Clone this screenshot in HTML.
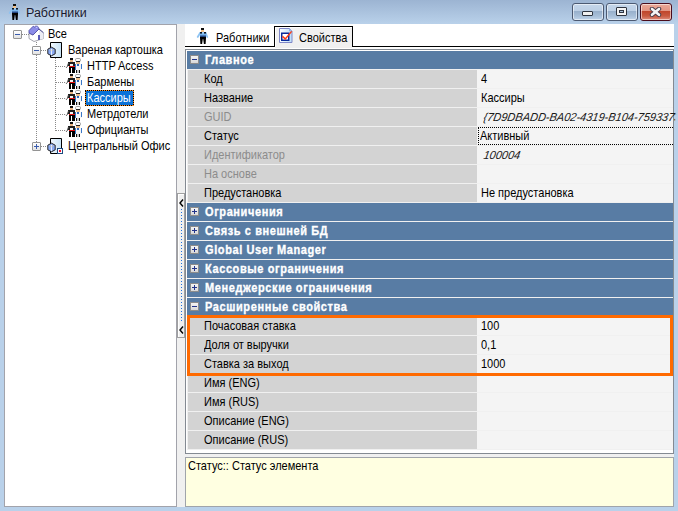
<!DOCTYPE html>
<html><head><meta charset="utf-8"><style>
*{box-sizing:border-box}
html,body{margin:0;padding:0}
body{width:678px;height:511px;position:relative;overflow:hidden;background:#b9d1ea;font-family:"Liberation Sans",sans-serif;font-size:11px;color:#000}
div,span,svg{position:absolute}
.title{left:0;top:0;width:678px;height:24px;background:linear-gradient(#9cb4d2,#b9d1ea)}
.ttext{left:26px;top:6px;font-size:12.5px;color:#1a1a30;white-space:nowrap;text-shadow:0 0 4px rgba(255,255,255,.5)}
.wb{top:3px;width:32px;height:18px;border:1px solid #4c5a72;border-radius:3px;background:linear-gradient(#c4d6ea 0,#bccfe5 45%,#98b0cc 46%,#a8bfd8 75%,#c0d4ea 100%);box-shadow:inset 0 0 0 1px rgba(255,255,255,.55)}
.wbc{border-color:#4a0c1c;background:linear-gradient(#eaa898 0,#e29482 45%,#c0462c 46%,#c85a40 75%,#e09080 100%)}
.tree{left:4px;top:24px;width:173px;height:483px;background:#fff;border:1px solid #a2a3ab}
.tl{white-space:nowrap;height:16px;line-height:16px;transform:scaleY(1.12);transform-origin:0 12px}
.ic{position:absolute}
.exp{width:9px;height:9px;border:1px solid #949494;border-radius:1px;background:linear-gradient(#fff,#e2e2e2)}
.exp .ph{position:absolute;left:1px;top:3px;width:5px;height:1px;background:#3a5cad}
.exp .pv{position:absolute;left:3px;top:1px;width:1px;height:5px;background:#3a5cad}
.hd{width:1px;background-image:linear-gradient(#8a8a8a 50%,transparent 50%);background-size:1px 2px}
.hh{height:1px;background-image:linear-gradient(90deg,#8a8a8a 50%,transparent 50%);background-size:2px 1px}
.split{left:177px;top:24px;width:8px;height:483px;background:#f0f0f0}
.sbtn{left:177px;top:193px;width:8px;height:145px;border:1px solid #a0a0a0;border-right-color:#a0a0a0;background:#f0f0f0;box-shadow:inset 1px 1px 0 #fff}
.arrow{left:1px;width:6px;height:8px}
.dots{left:181px;top:209px;width:1px;height:113px;background-image:linear-gradient(#1e6fdc 34%,transparent 34%);background-size:1px 3px}
.pane{left:185px;top:24px;width:489px;height:483px;background:#fff}
.tabline{top:46px;height:1px;background:#000}
.tab2{left:274px;top:26px;width:79px;height:21px;border:1px solid #000;border-bottom:0;background:#f0f0f0;box-shadow:inset 1px 1px 0 #fff}
.ttab{top:30px;white-space:nowrap;line-height:16px;transform:scaleY(1.12);transform-origin:0 12px}
.grid{left:185px;top:49px;width:489px;height:405px;border:1px solid #848a92;background:#f0f0f0;box-shadow:inset 1px 1px 0 #fff}
.cat{left:187px;width:486px;height:18px;background:#587ca4}
.catt{left:205px;height:18px;line-height:18px;font-weight:bold;color:#fff;letter-spacing:.6px;white-space:nowrap;-webkit-text-stroke:.3px #fff;transform:scaleY(1.12);transform-origin:0 13px}
.lab{left:188px;width:289px;height:18px;background:#d3d3d3}
.val{left:477px;width:196px;height:18px;background:#f4f4f4}
.lt{left:204px;height:18px;line-height:18px;white-space:nowrap;transform:scaleY(1.12);transform-origin:0 13px}
.vt{left:481px;height:18px;line-height:18px;white-space:nowrap;overflow:hidden;width:192px;transform:scaleY(1.12);transform-origin:0 13px}
.gexp{width:9px;height:9px;border:1px solid #8c8c8c;background:linear-gradient(#f4f4f4,#d8d8d8)}
.gexp .ph{position:absolute;left:1px;top:3px;width:5px;height:1px;background:#22338a}
.gexp .pv{position:absolute;left:3px;top:1px;width:1px;height:5px;background:#22338a}
.desc{left:185px;top:457px;width:489px;height:50px;border:1px solid #a0a4aa;background:#ffffe1}
.orange{left:187px;top:315px;width:486px;height:61px;border:3px solid #ff6a00}
</style></head><body>

<div class="title"></div>
<svg class="ic" style="left:8px;top:4px" width="16" height="17" viewBox="0 0 16 17">
<defs><linearGradient id="pt" x1="0" y1="0" x2="0" y2="1"><stop offset="0" stop-color="#a8d4fa"/><stop offset=".5" stop-color="#78b4ec"/><stop offset="1" stop-color="#0e2a66"/></linearGradient></defs>
<path d="M4.2 4L3.4 4.2L1 8.6L0.9 9.8L2.3 9.8L4.3 6.6Z" fill="#8cc2f2"/>
<path d="M9.6 4L10.4 4.2L12 8.6L12.1 9.8L10.7 9.8L9.5 6.6Z" fill="#8cc2f2"/>
<rect x="4" y="4" width="6" height="5" fill="url(#pt)"/>
<rect x="4" y="4" width="2" height="1.6" fill="#0c1420"/><rect x="8" y="4" width="2" height="1.6" fill="#0c1420"/>
<rect x="5" y="0" width="3" height="2" fill="#0e0e0e"/>
<rect x="5" y="2" width="3" height="2" fill="#f2c28a"/>
<path d="M4 9H10V10L9.6 16H7.9L7.2 11H6.8L6.1 16H4.4L4 10Z" fill="#000"/>
</svg>
<div class="ttext">Работники</div>
<div class="wb" style="left:572px"><div style="left:9px;top:7px;width:11px;height:5px;border:1px solid #2e3440;border-radius:1px;background:#f0f0f0"></div></div>
<div class="wb" style="left:606px"><div style="left:9px;top:3px;width:11px;height:9px;border:1px solid #2e3440;border-radius:1px;background:#f4f4f4"><div style="left:2px;top:2px;width:5px;height:3px;border:1px solid #2e3440;background:#a8c0d8"></div></div></div>
<div class="wb wbc" style="left:640px"><svg style="left:8px;top:3px" width="13" height="10" viewBox="0 0 13 10"><path d="M3 1.9L10 7.8M10 1.9L3 7.8" stroke="#463a48" stroke-width="4.4" stroke-linecap="round"/><path d="M3 1.9L10 7.8M10 1.9L3 7.8" stroke="#f4f4f4" stroke-width="2.6" stroke-linecap="round"/></svg></div>
<div class="tree"></div>
<div class="hh" style="left:22px;top:34px;width:7px"></div>
<div class="hd" style="left:36px;top:42px;width:1px;height:4px"></div>
<div class="hd" style="left:36px;top:55px;width:1px;height:91px"></div>
<div class="hh" style="left:41px;top:50px;width:6px"></div>
<div class="hh" style="left:41px;top:146px;width:6px"></div>
<div class="hd" style="left:55px;top:58px;width:1px;height:73px"></div>
<div class="hh" style="left:56px;top:66px;width:10px"></div>
<div class="hh" style="left:56px;top:82px;width:10px"></div>
<div class="hh" style="left:56px;top:98px;width:10px"></div>
<div class="hh" style="left:56px;top:114px;width:10px"></div>
<div class="hh" style="left:56px;top:130px;width:10px"></div>
<div class="exp" style="left:13px;top:30px"><i class="ph"></i></div>
<svg class="ic" style="left:26px;top:24px" width="20" height="20" viewBox="0 0 20 20">
<path d="M3 9L7 11L13 5L17.5 9L17.5 14.5L8 17.5L3 14.5Z" fill="#fff" stroke="#8c8c98" stroke-width=".8"/>
<path d="M13 5L17.5 9L17.5 14.5L13 16Z" fill="#ececf4"/>
<path d="M13 5L17.5 8.8" stroke="#4a4a90" stroke-width="1"/>
<path d="M3 6.5L7.2 2.2L8.5 3L9.5 2.2L11.5 2.2L12.5 3.8L13 5L7 11L3 9Z" fill="#8c8ce8" stroke="#5050a8" stroke-width=".9"/>
<path d="M10 3.5L11.5 3" stroke="#d0d0ff" stroke-width="1"/>
<rect x="12" y="11" width="2" height="5" fill="#5a5ab8"/>
</svg>
<div class="tl" style="left:48px;top:26px">Все</div>
<div class="exp" style="left:32px;top:46px"><i class="ph"></i></div>
<svg class="ic" style="left:47px;top:42px" width="20" height="18" viewBox="0 0 20 18">
<defs><linearGradient id="dg" x1="0" x2="1"><stop offset="0" stop-color="#f4fafe"/><stop offset="1" stop-color="#c6e2f6"/></linearGradient></defs>
<path d="M3.5 .5h11v15h-11z" fill="url(#dg)" stroke="#000" stroke-width="1"/>
<path d="M.8 7.2L4.5 5.2L8.2 7.2V11.8L4.5 13.8L.8 11.8Z" fill="#8aaaf2" stroke="#111" stroke-width=".9"/>
<path d="M4.5 7v6" stroke="#e8f0ff" stroke-width="1"/>
<path d="M2.5 7.5l2 1.2 2-1.2" stroke="#d8c8a0" stroke-width=".7" fill="none"/>
</svg>
<div class="tl" style="left:68px;top:42px">Вареная картошка</div>
<svg class="ic" style="left:64px;top:57px" width="20" height="17" viewBox="0 0 20 17" shape-rendering="crispEdges">
<rect x="11.5" y="1.5" width="5" height="3" rx="1.2" fill="#fff" stroke="#8a8a8a" stroke-width=".8" shape-rendering="auto"/>
<rect x="12" y="4" width="4" height="1" fill="#222"/>
<rect x="12" y="5" width="4" height="2" fill="#eebf8c"/>
<rect x="11" y="7" width="7" height="6" fill="#f6f6f8"/>
<rect x="11" y="7" width="1" height="6" fill="#3a78c8"/>
<rect x="17" y="7" width="1" height="5" fill="#3a78c8"/>
<rect x="13" y="7" width="2" height="2" fill="#2a64b8"/>
<rect x="12" y="13" width="4" height="3" fill="#c8c8c8"/>
<rect x="12" y="13" width="1" height="3" fill="#111"/><rect x="15" y="13" width="1" height="3" fill="#111"/>
<rect x="6" y="1" width="3" height="2" fill="#111"/>
<rect x="6" y="3" width="3" height="2" fill="#e8b484"/>
<rect x="4" y="5" width="7" height="4" fill="#1e1e1e"/>
<rect x="6" y="6.5" width="3" height="2.5" fill="#f4f4f4"/>
<rect x="5" y="9" width="6" height="1" fill="#e81010"/>
<rect x="5" y="10" width="6" height="6" fill="#000"/>
<rect x="7" y="11" width="1" height="5" fill="#fff"/>
<path d="M4.5 6L3.2 9.8L2.4 10.5L1.8 9.9" stroke="#4a4a4a" stroke-width="1" fill="none" shape-rendering="auto"/>
</svg>
<div class="tl" style="left:87px;top:58px">HTTP Access</div>
<svg class="ic" style="left:64px;top:73px" width="20" height="17" viewBox="0 0 20 17" shape-rendering="crispEdges">
<rect x="11.5" y="1.5" width="5" height="3" rx="1.2" fill="#fff" stroke="#8a8a8a" stroke-width=".8" shape-rendering="auto"/>
<rect x="12" y="4" width="4" height="1" fill="#222"/>
<rect x="12" y="5" width="4" height="2" fill="#eebf8c"/>
<rect x="11" y="7" width="7" height="6" fill="#f6f6f8"/>
<rect x="11" y="7" width="1" height="6" fill="#3a78c8"/>
<rect x="17" y="7" width="1" height="5" fill="#3a78c8"/>
<rect x="13" y="7" width="2" height="2" fill="#2a64b8"/>
<rect x="12" y="13" width="4" height="3" fill="#c8c8c8"/>
<rect x="12" y="13" width="1" height="3" fill="#111"/><rect x="15" y="13" width="1" height="3" fill="#111"/>
<rect x="6" y="1" width="3" height="2" fill="#111"/>
<rect x="6" y="3" width="3" height="2" fill="#e8b484"/>
<rect x="4" y="5" width="7" height="4" fill="#1e1e1e"/>
<rect x="6" y="6.5" width="3" height="2.5" fill="#f4f4f4"/>
<rect x="5" y="9" width="6" height="1" fill="#e81010"/>
<rect x="5" y="10" width="6" height="6" fill="#000"/>
<rect x="7" y="11" width="1" height="5" fill="#fff"/>
<path d="M4.5 6L3.2 9.8L2.4 10.5L1.8 9.9" stroke="#4a4a4a" stroke-width="1" fill="none" shape-rendering="auto"/>
</svg>
<div class="tl" style="left:87px;top:74px">Бармены</div>
<svg class="ic" style="left:64px;top:89px" width="20" height="17" viewBox="0 0 20 17" shape-rendering="crispEdges">
<rect x="11.5" y="1.5" width="5" height="3" rx="1.2" fill="#fff" stroke="#8a8a8a" stroke-width=".8" shape-rendering="auto"/>
<rect x="12" y="4" width="4" height="1" fill="#222"/>
<rect x="12" y="5" width="4" height="2" fill="#eebf8c"/>
<rect x="11" y="7" width="7" height="6" fill="#f6f6f8"/>
<rect x="11" y="7" width="1" height="6" fill="#3a78c8"/>
<rect x="17" y="7" width="1" height="5" fill="#3a78c8"/>
<rect x="13" y="7" width="2" height="2" fill="#2a64b8"/>
<rect x="12" y="13" width="4" height="3" fill="#c8c8c8"/>
<rect x="12" y="13" width="1" height="3" fill="#111"/><rect x="15" y="13" width="1" height="3" fill="#111"/>
<rect x="6" y="1" width="3" height="2" fill="#111"/>
<rect x="6" y="3" width="3" height="2" fill="#e8b484"/>
<rect x="4" y="5" width="7" height="4" fill="#1e1e1e"/>
<rect x="6" y="6.5" width="3" height="2.5" fill="#f4f4f4"/>
<rect x="5" y="9" width="6" height="1" fill="#e81010"/>
<rect x="5" y="10" width="6" height="6" fill="#000"/>
<rect x="7" y="11" width="1" height="5" fill="#fff"/>
<path d="M4.5 6L3.2 9.8L2.4 10.5L1.8 9.9" stroke="#4a4a4a" stroke-width="1" fill="none" shape-rendering="auto"/>
</svg>
<svg style="left:85px;top:90px" width="49" height="16" shape-rendering="crispEdges"><rect x=".5" y=".5" width="48" height="15" fill="#0a72d8" stroke="#000"/><rect x=".5" y=".5" width="48" height="15" fill="none" stroke="#ff8c1a" stroke-dasharray="1 1"/></svg>
<div class="tl" style="left:87px;top:90px;color:#fff">Кассиры</div>
<svg class="ic" style="left:64px;top:105px" width="20" height="17" viewBox="0 0 20 17" shape-rendering="crispEdges">
<rect x="11.5" y="1.5" width="5" height="3" rx="1.2" fill="#fff" stroke="#8a8a8a" stroke-width=".8" shape-rendering="auto"/>
<rect x="12" y="4" width="4" height="1" fill="#222"/>
<rect x="12" y="5" width="4" height="2" fill="#eebf8c"/>
<rect x="11" y="7" width="7" height="6" fill="#f6f6f8"/>
<rect x="11" y="7" width="1" height="6" fill="#3a78c8"/>
<rect x="17" y="7" width="1" height="5" fill="#3a78c8"/>
<rect x="13" y="7" width="2" height="2" fill="#2a64b8"/>
<rect x="12" y="13" width="4" height="3" fill="#c8c8c8"/>
<rect x="12" y="13" width="1" height="3" fill="#111"/><rect x="15" y="13" width="1" height="3" fill="#111"/>
<rect x="6" y="1" width="3" height="2" fill="#111"/>
<rect x="6" y="3" width="3" height="2" fill="#e8b484"/>
<rect x="4" y="5" width="7" height="4" fill="#1e1e1e"/>
<rect x="6" y="6.5" width="3" height="2.5" fill="#f4f4f4"/>
<rect x="5" y="9" width="6" height="1" fill="#e81010"/>
<rect x="5" y="10" width="6" height="6" fill="#000"/>
<rect x="7" y="11" width="1" height="5" fill="#fff"/>
<path d="M4.5 6L3.2 9.8L2.4 10.5L1.8 9.9" stroke="#4a4a4a" stroke-width="1" fill="none" shape-rendering="auto"/>
</svg>
<div class="tl" style="left:87px;top:106px">Метрдотели</div>
<svg class="ic" style="left:64px;top:121px" width="20" height="17" viewBox="0 0 20 17" shape-rendering="crispEdges">
<rect x="11.5" y="1.5" width="5" height="3" rx="1.2" fill="#fff" stroke="#8a8a8a" stroke-width=".8" shape-rendering="auto"/>
<rect x="12" y="4" width="4" height="1" fill="#222"/>
<rect x="12" y="5" width="4" height="2" fill="#eebf8c"/>
<rect x="11" y="7" width="7" height="6" fill="#f6f6f8"/>
<rect x="11" y="7" width="1" height="6" fill="#3a78c8"/>
<rect x="17" y="7" width="1" height="5" fill="#3a78c8"/>
<rect x="13" y="7" width="2" height="2" fill="#2a64b8"/>
<rect x="12" y="13" width="4" height="3" fill="#c8c8c8"/>
<rect x="12" y="13" width="1" height="3" fill="#111"/><rect x="15" y="13" width="1" height="3" fill="#111"/>
<rect x="6" y="1" width="3" height="2" fill="#111"/>
<rect x="6" y="3" width="3" height="2" fill="#e8b484"/>
<rect x="4" y="5" width="7" height="4" fill="#1e1e1e"/>
<rect x="6" y="6.5" width="3" height="2.5" fill="#f4f4f4"/>
<rect x="5" y="9" width="6" height="1" fill="#e81010"/>
<rect x="5" y="10" width="6" height="6" fill="#000"/>
<rect x="7" y="11" width="1" height="5" fill="#fff"/>
<path d="M4.5 6L3.2 9.8L2.4 10.5L1.8 9.9" stroke="#4a4a4a" stroke-width="1" fill="none" shape-rendering="auto"/>
</svg>
<div class="tl" style="left:87px;top:122px">Официанты</div>
<div class="exp" style="left:32px;top:142px"><i class="ph"></i><i class="pv"></i></div>
<svg class="ic" style="left:47px;top:138px" width="20" height="18" viewBox="0 0 20 18">
<defs><linearGradient id="dg" x1="0" x2="1"><stop offset="0" stop-color="#f4fafe"/><stop offset="1" stop-color="#c6e2f6"/></linearGradient></defs>
<path d="M3.5 .5h11v15h-11z" fill="url(#dg)" stroke="#000" stroke-width="1"/>
<path d="M.8 7.2L4.5 5.2L8.2 7.2V11.8L4.5 13.8L.8 11.8Z" fill="#8aaaf2" stroke="#111" stroke-width=".9"/>
<path d="M4.5 7v6" stroke="#e8f0ff" stroke-width="1"/>
<path d="M2.5 7.5l2 1.2 2-1.2" stroke="#d8c8a0" stroke-width=".7" fill="none"/>
<rect x="10.5" y="10.5" width="5" height="5" fill="#fff" stroke="#1c4a80" stroke-width="1"/><rect x="12" y="12" width="2" height="2" fill="#f01030"/></svg>
<div class="tl" style="left:68px;top:138px">Центральный Офис</div>
<div class="split"></div>
<div class="sbtn"></div>
<svg style="left:179px;top:199px" width="5" height="8" viewBox="0 0 5 8"><path d="M4 0.5L1 4l3 3.5" stroke="#000" stroke-width="1.4" fill="none"/></svg>
<svg style="left:179px;top:326px" width="5" height="8" viewBox="0 0 5 8"><path d="M4 0.5L1 4l3 3.5" stroke="#000" stroke-width="1.4" fill="none"/></svg>
<div class="dots"></div>
<div class="pane"></div>
<div class="tabline" style="left:185px;width:89px"></div>
<div class="tabline" style="left:352px;width:322px"></div>
<div class="tab2"></div><div style="left:275px;top:47px;width:77px;height:1px;background:#f0f0f0"></div>
<svg class="ic" style="left:196px;top:28px" width="16" height="17" viewBox="0 0 16 17">
<defs><linearGradient id="pt" x1="0" y1="0" x2="0" y2="1"><stop offset="0" stop-color="#a8d4fa"/><stop offset=".5" stop-color="#78b4ec"/><stop offset="1" stop-color="#0e2a66"/></linearGradient></defs>
<path d="M4.2 4L3.4 4.2L1 8.6L0.9 9.8L2.3 9.8L4.3 6.6Z" fill="#8cc2f2"/>
<path d="M9.6 4L10.4 4.2L12 8.6L12.1 9.8L10.7 9.8L9.5 6.6Z" fill="#8cc2f2"/>
<rect x="4" y="4" width="6" height="5" fill="url(#pt)"/>
<rect x="4" y="4" width="2" height="1.6" fill="#0c1420"/><rect x="8" y="4" width="2" height="1.6" fill="#0c1420"/>
<rect x="5" y="0" width="3" height="2" fill="#0e0e0e"/>
<rect x="5" y="2" width="3" height="2" fill="#f2c28a"/>
<path d="M4 9H10V10L9.6 16H7.9L7.2 11H6.8L6.1 16H4.4L4 10Z" fill="#000"/>
</svg>
<div class="ttab" style="left:216px">Работники</div>
<svg class="ic" style="left:279px;top:28px" width="16" height="16" viewBox="0 0 16 16">
<defs><linearGradient id="cg" x1="0" x2="1"><stop offset="0" stop-color="#fff"/><stop offset="1" stop-color="#b8dcf8"/></linearGradient></defs>
<path d="M.5 .5h10l2.5 2.5v11.5h-12.5z" fill="url(#cg)" stroke="#8088c8" stroke-width="1"/>
<path d="M10.5 .5v2.5h2.5" fill="#a8d0f4" stroke="#8aa8e0" stroke-width=".8"/>
<rect x="2.75" y="5.25" width="7" height="7" fill="#fff" stroke="#0a2a9a" stroke-width="1.5"/>
<path d="M3.4 8.4L6.3 10.9L12.6 3.4" stroke="#ff3a10" stroke-width="1.4" fill="none"/>
</svg>
<div class="ttab" style="left:299px">Свойства</div>
<div class="grid"></div>
<div class="cat" style="top:51px"></div>
<div class="gexp" style="left:190px;top:55px"><i class="ph"></i></div>
<div class="catt" style="top:51px">Главное</div>
<div class="lab" style="top:70px"></div><div class="val" style="top:70px"></div>
<div class="lt" style="top:70px;color:#000">Код</div>
<div class="vt" style="top:70px">4</div>
<div class="lab" style="top:89px"></div><div class="val" style="top:89px"></div>
<div class="lt" style="top:89px;color:#000">Название</div>
<div class="vt" style="top:89px">Кассиры</div>
<div class="lab" style="top:108px"></div><div class="val" style="top:108px"></div>
<div class="lt" style="top:108px;color:#8c8c8c">GUID</div>
<div class="vt" style="top:108px;left:483px;font-style:italic;color:#1a1a1a;transform:scaleY(1.05) skewX(-10deg);transform-origin:0 13px">{7D9DBADD-BA02-4319-B104-7593373A}</div>
<div class="lab" style="top:127px"></div><div class="val" style="top:127px"></div>
<div class="lt" style="top:127px;color:#000">Статус</div>
<div style="left:478px;top:127px;width:195px;height:18px;border:1px dotted #000;border-right:0"></div>
<div class="vt" style="top:127px;left:480px">Активный</div>
<div class="lab" style="top:146px"></div><div class="val" style="top:146px"></div>
<div class="lt" style="top:146px;color:#8c8c8c">Идентификатор</div>
<div class="vt" style="top:146px;left:483px;font-style:italic;color:#1a1a1a;transform:scaleY(1.05) skewX(-10deg);transform-origin:0 13px">100004</div>
<div class="lab" style="top:165px"></div><div class="val" style="top:165px"></div>
<div class="lt" style="top:165px;color:#8c8c8c">На основе</div>
<div class="lab" style="top:184px"></div><div class="val" style="top:184px"></div>
<div class="lt" style="top:184px;color:#000">Предустановка</div>
<div class="vt" style="top:184px">Не предустановка</div>
<div class="cat" style="top:203px"></div>
<div class="gexp" style="left:190px;top:207px"><i class="ph"></i><i class="pv"></i></div>
<div class="catt" style="top:203px">Ограничения</div>
<div class="cat" style="top:222px"></div>
<div class="gexp" style="left:190px;top:226px"><i class="ph"></i><i class="pv"></i></div>
<div class="catt" style="top:222px">Связь с внешней БД</div>
<div class="cat" style="top:241px"></div>
<div class="gexp" style="left:190px;top:245px"><i class="ph"></i><i class="pv"></i></div>
<div class="catt" style="top:241px">Global User Manager</div>
<div class="cat" style="top:260px"></div>
<div class="gexp" style="left:190px;top:264px"><i class="ph"></i><i class="pv"></i></div>
<div class="catt" style="top:260px">Кассовые ограничения</div>
<div class="cat" style="top:279px"></div>
<div class="gexp" style="left:190px;top:283px"><i class="ph"></i><i class="pv"></i></div>
<div class="catt" style="top:279px">Менеджерские ограничения</div>
<div class="cat" style="top:298px"></div>
<div class="gexp" style="left:190px;top:302px"><i class="ph"></i></div>
<div class="catt" style="top:298px">Расширенные свойства</div>
<div class="lab" style="top:317px"></div><div class="val" style="top:317px"></div>
<div class="lt" style="top:317px;color:#000">Почасовая ставка</div>
<div class="vt" style="top:317px">100</div>
<div class="lab" style="top:336px"></div><div class="val" style="top:336px"></div>
<div class="lt" style="top:336px;color:#000">Доля от выручки</div>
<div class="vt" style="top:336px">0,1</div>
<div class="lab" style="top:355px"></div><div class="val" style="top:355px"></div>
<div class="lt" style="top:355px;color:#000">Ставка за выход</div>
<div class="vt" style="top:355px">1000</div>
<div class="lab" style="top:374px"></div><div class="val" style="top:374px"></div>
<div class="lt" style="top:374px;color:#000">Имя (ENG)</div>
<div class="lab" style="top:393px"></div><div class="val" style="top:393px"></div>
<div class="lt" style="top:393px;color:#000">Имя (RUS)</div>
<div class="lab" style="top:412px"></div><div class="val" style="top:412px"></div>
<div class="lt" style="top:412px;color:#000">Описание (ENG)</div>
<div class="lab" style="top:431px"></div><div class="val" style="top:431px"></div>
<div class="lt" style="top:431px;color:#000">Описание (RUS)</div>
<div class="orange"></div>
<div style="left:186px;top:450px;width:487px;height:3px;background:#fff"></div><div style="left:185px;top:454px;width:489px;height:3px;background:#f0f0f0"></div>
<div class="desc"><div style="left:2px;top:0px;white-space:nowrap;line-height:16px;transform:scaleY(1.12);transform-origin:0 12px">Статус:: Статус элемента</div></div>
</body></html>
